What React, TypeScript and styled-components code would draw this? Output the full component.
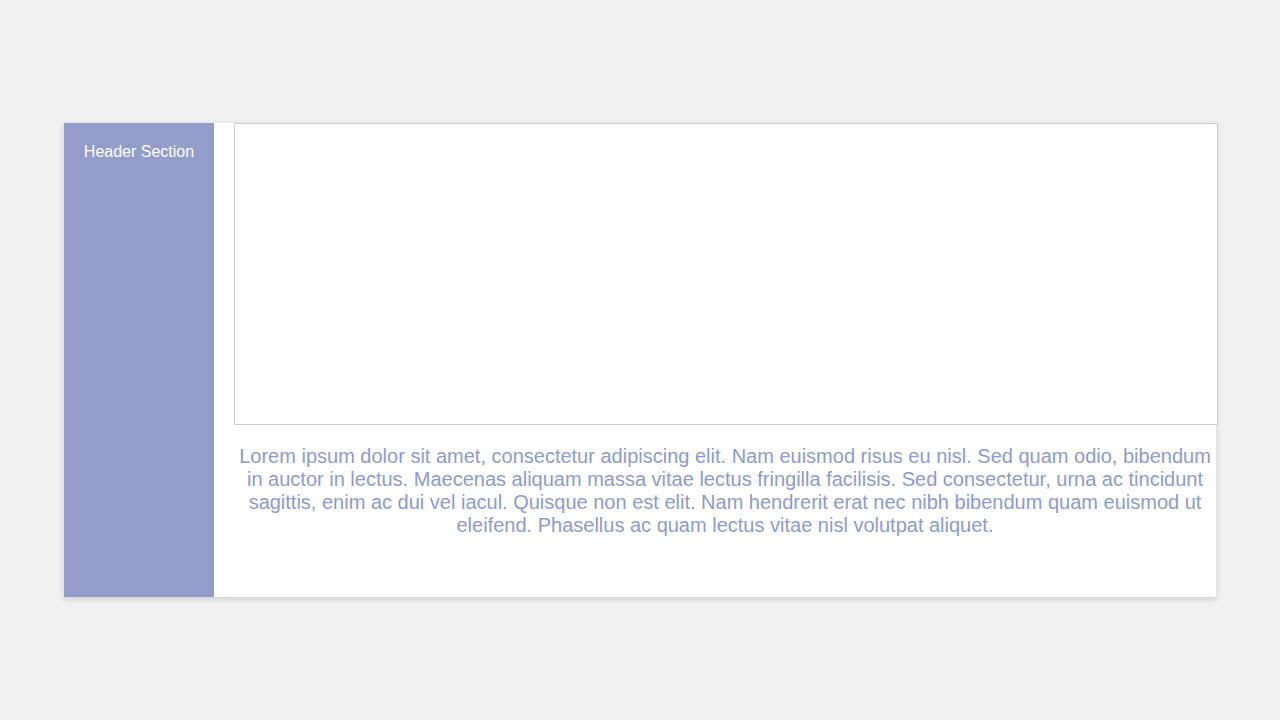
import React from "react";
import styled, { createGlobalStyle } from "styled-components";

const GlobalStyle = createGlobalStyle`
  html, body {
    margin: 0;
    padding: 0;
    background: #f0f0f0;
    font-family: "Liberation Sans", Arial, sans-serif;
  }
`;

const Page = styled.div`
  height: 100vh;
  display: flex;
  align-items: center;
  justify-content: center;
`;

const Card = styled.div`
  width: 90%;
  height: 474px;
  display: flex;
  background: #ffffff;
  box-shadow: 0 2px 6px rgba(0, 0, 0, 0.15);
`;

const Sidebar = styled.aside`
  width: 150px;
  flex-shrink: 0;
  background: #949dca;
  color: #ffffff;
  font-size: 16px;
  text-align: center;
  padding-top: 20px;
  box-sizing: border-box;
`;

const Main = styled.main`
  flex: 1;
  min-width: 0;
  padding-left: 20px;
`;

const Frame = styled.div`
  width: 100%;
  height: 300px;
  border: 1px solid #cccccc;
  background: #ffffff;
`;

const Text = styled.p`
  margin: 20px 0 0;
  font-size: 20px;
  color: #8e9ad0;
  text-align: center;
`;

export default function App() {
  return (
    <>
      <GlobalStyle />
      <Page>
        <Card>
          <Sidebar>Header Section</Sidebar>
          <Main>
            <Frame />
            <Text>
              Lorem ipsum dolor sit amet, consectetur adipiscing elit. Nam euismod risus eu nisl. Sed quam odio, bibendum in auctor in lectus. Maecenas aliquam massa vitae lectus fringilla facilisis. Sed consectetur, urna ac tincidunt sagittis, enim ac dui vel iacul. Quisque non est elit. Nam hendrerit erat nec nibh bibendum quam euismod ut eleifend. Phasellus ac quam lectus vitae nisl volutpat aliquet.
            </Text>
          </Main>
        </Card>
      </Page>
    </>
  );
}
